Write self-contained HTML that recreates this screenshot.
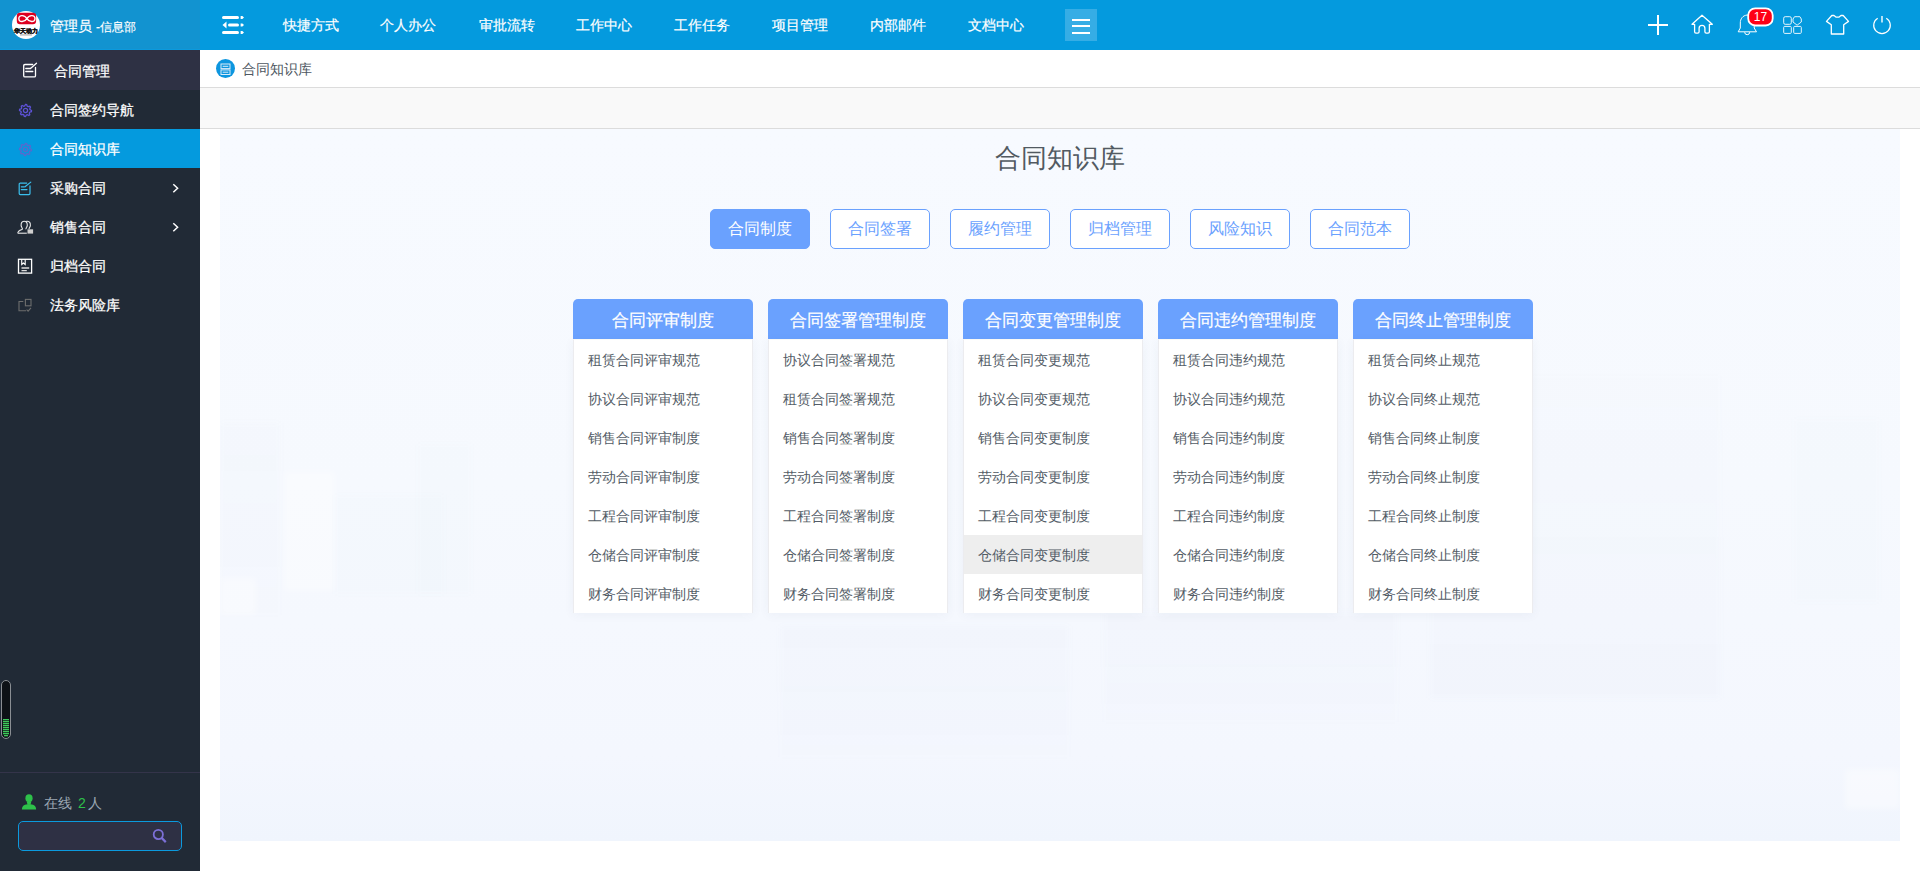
<!DOCTYPE html>
<html><head><meta charset="utf-8">
<style>
*{margin:0;padding:0;box-sizing:border-box}
html,body{width:1920px;height:871px;overflow:hidden;background:#fff;font-family:"Liberation Sans",sans-serif}
svg{position:absolute;overflow:visible}
#top{position:absolute;left:0;top:0;width:1920px;height:50px;background:#049ade}
#logohd{position:absolute;left:0;top:0;width:200px;height:50px;background:#1293d0;border-bottom:1px solid #0b9ade}
#logo{position:absolute;left:12px;top:11px;width:28px;height:28px;border-radius:50%;background:#fff;overflow:hidden}
#uname{position:absolute;left:50px;top:16px;font-size:14px;color:#fff;line-height:20px;white-space:nowrap;-webkit-text-stroke:0.2px #fff}
.nav{position:absolute;top:15px;font-size:14px;color:#fff;line-height:20px;white-space:nowrap;-webkit-text-stroke:0.2px #fff}
#hamb{position:absolute;left:1065px;top:9px;width:32px;height:32px;background:#36ade5}
#hamb i{position:absolute;left:7px;width:18px;height:2px;background:#fff}
#side{position:absolute;left:0;top:50px;width:200px;height:821px;background:#212a36}
.mi{position:absolute;left:0;width:200px;height:39px;color:#fff;font-size:14px;line-height:39px;-webkit-text-stroke:0.25px #fff}
.mi span{position:absolute;left:50px;top:1px}
#sep{position:absolute;left:0;top:722px;width:200px;height:1px;background:#34344a}
#bc{position:absolute;left:200px;top:50px;width:1720px;height:38px;background:#fff;border-bottom:1px solid #dcdcdc}
#band{position:absolute;left:200px;top:88px;width:1720px;height:41px;background:#f9f9f9;border-bottom:1px solid #dcdcdc}
#content{position:absolute;left:220px;top:129px;width:1680px;height:712px;background:linear-gradient(#f7faff 0%,#f6f9fe 50%,#f4f7fe 88%,#f0f5fd 100%);overflow:hidden}
.bs{position:absolute;filter:blur(3px)}
#title{position:absolute;left:0;width:1680px;top:11px;text-align:center;font-size:26px;line-height:36px;color:#525a62}
.btn{position:absolute;top:80px;width:100px;height:40px;border:1px solid #6aa1fe;border-radius:5px;background:#fff;color:#6aa1fe;font-size:16px;line-height:38px;text-align:center}
.btn.on{background:#6aa1fe;color:#fff}
.card{position:absolute;top:170px;width:180px}
.ch{height:40px;background:#6aa1fe;border-radius:5px 5px 0 0;color:#fff;font-size:17px;line-height:43px;text-align:center;white-space:nowrap;-webkit-text-stroke:0.2px #fff}
.cb{background:#fff;border-top:1px solid #fbfaf6;border-left:1px solid #ececef;border-right:1px solid #ececef;box-shadow:0 2px 10px rgba(60,80,120,.05)}
.cb div{height:39px;line-height:41px;padding-left:14px;font-size:14px;color:#535c66;white-space:nowrap}
.cb div.hl{background:#eeeeee}
</style></head><body>
<div id="top"></div>
<div id="logohd">
  <svg style="left:12px;top:11px" width="28" height="28" viewBox="0 0 28 28">
    <circle cx="14" cy="14" r="14" fill="#fff"/>
    <rect x="4.8" y="1.7" width="19.3" height="11.6" rx="3.2" fill="#dd0020"/>
    <path d="M14.9 7.6 C13 4.2 6.8 3.2 6.8 7.6 C6.8 12 13 11 14.9 7.6 C16.8 4.2 23 3.2 23 7.6 C23 12 16.8 11 14.9 7.6 Z" fill="none" stroke="#fff" stroke-width="1.4"/>
    <text x="14" y="21.8" font-size="6.2" font-weight="bold" text-anchor="middle" fill="#111" stroke="#111" stroke-width="0.35" letter-spacing="-0.1">华天动力</text>
    <rect x="8" y="23.2" width="12" height="1.4" fill="#bbb"/>
  </svg>
  <div id="uname">管理员<span style="position:absolute;left:46px;top:1px;font-size:12.2px;-webkit-text-stroke:0.15px #fff">-信息部</span></div>
</div>
<svg style="left:222px;top:16px" width="22" height="19" viewBox="0 0 22 19">
  <rect x="0" y="0" width="17" height="3" rx="1.5" fill="#fff"/>
  <path d="M18.6 0.0 H20.4 L22 1.5 L20.4 3.0 H18.6 Z" fill="#fff"/>
  <rect x="6" y="7.5" width="11" height="3" rx="1.5" fill="#fff"/>
  <path d="M18.6 7.5 H20.4 L22 9.0 L20.4 10.5 H18.6 Z" fill="#fff"/>
  <rect x="0" y="15" width="17" height="3" rx="1.5" fill="#fff"/>
  <path d="M18.6 15.0 H20.4 L22 16.5 L20.4 18.0 H18.6 Z" fill="#fff"/>
  <path d="M0.5 9 L4.5 5.5 L4.5 12.5 Z" fill="#fff"/>
</svg>
<div class="nav" style="left:283px">快捷方式</div>
<div class="nav" style="left:380px">个人办公</div>
<div class="nav" style="left:479px">审批流转</div>
<div class="nav" style="left:576px">工作中心</div>
<div class="nav" style="left:674px">工作任务</div>
<div class="nav" style="left:772px">项目管理</div>
<div class="nav" style="left:870px">内部邮件</div>
<div class="nav" style="left:968px">文档中心</div>

<svg style="left:1648px;top:15px" width="20" height="20" viewBox="0 0 20 20"><path d="M10 0V20M0 10H20" stroke="#fff" stroke-width="2"/></svg>
<svg style="left:1688px;top:10px" width="28" height="28" viewBox="0 0 28 28"><path d="M4 14.3 L14 5.3 L24.3 14.3 L21.4 14.3 L21.4 21.8 Q21.4 23.2 20 23.2 L18.3 23.2 Q16.9 23.2 16.9 21.8 L16.9 18.2 A2.9 2.9 0 0 0 11.1 18.2 L11.1 21.8 Q11.1 23.2 9.7 23.2 L8 23.2 Q6.6 23.2 6.6 21.8 L6.6 14.3 Z" fill="none" stroke="#fff" stroke-width="1.3" stroke-linejoin="round"/></svg>
<svg style="left:1734px;top:4px" width="42" height="36" viewBox="0 0 42 36"><path d="M13.2 11 C8.5 11.5 6.3 15 6.3 19 L6.3 24 L4.2 27.8 L22.5 27.8 L20.2 24 L20.2 19 C20.2 15 18 11.5 13.2 11 Z" fill="none" stroke="#fff" stroke-width="1"/><path d="M10.7 28.2 A2.5 2.5 0 0 0 15.7 28.2" fill="none" stroke="#fff" stroke-width="1"/>
<rect x="14.2" y="4.3" width="24.5" height="17.2" rx="7" fill="#ff0016" stroke="#fff" stroke-width="1.8"/>
<text x="26.5" y="17" font-size="12" text-anchor="middle" fill="#fff" font-family="Liberation Sans">17</text></svg>
<svg style="left:1778px;top:10px" width="30" height="30" viewBox="0 0 30 30" fill="none" stroke="#fff" stroke-width="1" opacity=".9"><rect x="5.7" y="6.7" width="7.6" height="7.6" rx="1.5"/><path d="M19.1 6.7 L21.9 6.7 L23.3 9 L23.3 12 L19.1 15.2 L15 12 L15 9 L16.5 6.7 Z" stroke-linejoin="round"/><rect x="5.7" y="16.4" width="7.6" height="7" rx="1"/><rect x="15.7" y="16.4" width="7.6" height="7" rx="1"/></svg>
<svg style="left:1822px;top:10px" width="30" height="30" viewBox="0 0 30 30"><path d="M9.8 5.5 L12 5.5 L14.2 7.2 L16.8 7.2 L19 5.5 L21.2 5.5 L26.5 11.4 L21.7 14.7 L21.7 24 L9.3 24 L9.3 14.7 L4.5 11.4 Z" fill="none" stroke="#fff" stroke-width="1.3" stroke-linejoin="round"/></svg>
<svg style="left:1867px;top:10px" width="30" height="30" viewBox="0 0 30 30" fill="none" stroke="#fff" stroke-width="1.2"><path d="M10.7 8.2 A8.3 8.3 0 1 0 19.3 8.2"/><path d="M15 6 V12.6" stroke-width="1.4"/></svg>
<div id="hamb"><i style="top:10px"></i><i style="top:16px"></i><i style="top:23px"></i></div>

<div id="side">
  <div class="mi" style="top:0;height:40px;line-height:40px;background:#2e3144"><span style="left:54px">合同管理</span></div>
  <div class="mi" style="top:40px"><span>合同签约导航</span></div>
  <div class="mi" style="top:79px;background:#049ade"><span>合同知识库</span></div>
  <div class="mi" style="top:118px"><span>采购合同</span></div>
  <div class="mi" style="top:157px"><span>销售合同</span></div>
  <div class="mi" style="top:196px"><span>归档合同</span></div>
  <div class="mi" style="top:235px"><span>法务风险库</span></div>
  <div id="sep"></div>
</div>
<svg style="left:23px;top:63px" width="15" height="15" viewBox="0 0 15 15" fill="none" stroke="#fff" stroke-width="1.3" stroke-linecap="round"><path d="M9.7 1.5 H2 Q0.7 1.5 0.7 2.8 V12.7 Q0.7 13.9 2 13.9 H11.3 Q12.5 13.9 12.5 12.7 V4.5"/><path d="M2.8 5.5 H7.3 M2.8 8.5 H9.8 M7.5 5.5 L13.5 0.3"/></svg>
<svg style="left:18.5px;top:104px" width="13" height="13" viewBox="0 0 13 13"><path d="M6.50 0.50 L7.67 0.62 L8.26 2.25 L9.06 2.68 L10.74 2.26 L11.49 3.17 L10.75 4.74 L11.01 5.60 L12.50 6.50 L12.38 7.67 L10.75 8.26 L10.32 9.06 L10.74 10.74 L9.83 11.49 L8.26 10.75 L7.40 11.01 L6.50 12.50 L5.33 12.38 L4.74 10.75 L3.94 10.32 L2.26 10.74 L1.51 9.83 L2.25 8.26 L1.99 7.40 L0.50 6.50 L0.62 5.33 L2.25 4.74 L2.68 3.94 L2.26 2.26 L3.17 1.51 L4.74 2.25 L5.60 1.99Z" fill="none" stroke="#5d52d6" stroke-width="1.3" opacity="1"/><circle cx="6.5" cy="6.5" r="2.1" fill="none" stroke="#5d52d6" stroke-width="1.3" opacity="1"/></svg>
<svg style="left:18.5px;top:143px" width="13" height="13" viewBox="0 0 13 13"><path d="M6.50 0.50 L7.67 0.62 L8.26 2.25 L9.06 2.68 L10.74 2.26 L11.49 3.17 L10.75 4.74 L11.01 5.60 L12.50 6.50 L12.38 7.67 L10.75 8.26 L10.32 9.06 L10.74 10.74 L9.83 11.49 L8.26 10.75 L7.40 11.01 L6.50 12.50 L5.33 12.38 L4.74 10.75 L3.94 10.32 L2.26 10.74 L1.51 9.83 L2.25 8.26 L1.99 7.40 L0.50 6.50 L0.62 5.33 L2.25 4.74 L2.68 3.94 L2.26 2.26 L3.17 1.51 L4.74 2.25 L5.60 1.99Z" fill="none" stroke="#6a5fc9" stroke-width="1.3" opacity="0.85"/><circle cx="6.5" cy="6.5" r="2.1" fill="none" stroke="#6a5fc9" stroke-width="1.3" opacity="0.85"/></svg>
<svg style="left:18px;top:181px" width="14" height="15" viewBox="0 0 14 15" fill="none" stroke="#3bbfee" stroke-width="1.2" stroke-linecap="round"><path d="M8.7 2.1 H2.3 Q1.2 2.1 1.2 3.2 V12.6 Q1.2 13.6 2.3 13.6 H10.9 Q12 13.6 12 12.6 V4.8"/><path d="M3.3 5.8 H6 M3.3 8.6 H9 M7 5.8 L12.8 1.1"/></svg>
<svg style="left:16px;top:220px" width="18" height="15" viewBox="0 0 18 15" fill="none" stroke="#e8e8e8" stroke-width="1.1"><path d="M1.8 13.2 C1.8 10.5 4.8 9.8 6.3 9.3 C6.6 8.5 6.4 8 5.8 7.3 C4.6 5.7 4.7 1.2 8.2 1.2 C11.7 1.2 11.8 5.7 10.6 7.3 C10 8 9.8 8.5 10.1 9.3"/><path d="M9.3 1.6 C10 1.3 10.6 1.2 11.3 1.2 C14.8 1.2 14.9 5.7 13.7 7.3 C13.2 8 13 8.4 13.1 9"/><path d="M1.8 13.2 H10.8"/><rect x="11.5" y="9.3" width="5.6" height="4.3" fill="#cfcfcf" stroke="none"/></svg>
<svg style="left:17px;top:258px" width="16" height="16" viewBox="0 0 16 16" fill="none" stroke="#fff" stroke-width="1.3"><rect x="1.5" y="1.3" width="13.1" height="13.8"/><path d="M4.7 1.5 V6.5 L6.4 5 L8.2 6.5 V1.5" stroke-width="1.1"/><path d="M4.5 10 H12.2 M4.5 12.6 H9.8" stroke="#ddd"/></svg>
<svg style="left:17px;top:297px" width="16" height="16" viewBox="0 0 16 16" fill="none" stroke="#6e6e6e" stroke-width="1.1"><path d="M6.3 4.5 H2 V13.7 H9"/><rect x="8.4" y="2.4" width="5.6" height="6.4"/><path d="M9.6 12.6 L11.1 14.1 L14 10.9"/></svg>
<svg style="left:165px;top:177px" width="22" height="22" viewBox="0 0 22 22" fill="none" stroke="#fff" stroke-width="1.5"><path d="M8.3 7.3 L12.6 11.3 L8.3 15.3"/></svg>
<svg style="left:165px;top:216px" width="22" height="22" viewBox="0 0 22 22" fill="none" stroke="#fff" stroke-width="1.5"><path d="M8.3 7.3 L12.6 11.3 L8.3 15.3"/></svg>


<div style="position:absolute;left:1px;top:680px;width:10px;height:59px;border:1px solid #8a8e93;border-radius:5px;background:#0d1116"></div>
<svg style="left:3px;top:718px" width="6" height="20" viewBox="0 0 6 20"><rect x="0" y="1" width="6" height="1.3" fill="#3ec95a"/><rect x="0" y="3" width="6" height="1.3" fill="#3ec95a"/><rect x="0" y="5" width="6" height="1.3" fill="#3ec95a"/><rect x="0" y="7" width="6" height="1.3" fill="#3ec95a"/><rect x="0" y="9" width="6" height="1.3" fill="#3ec95a"/><rect x="0" y="11" width="6" height="1.3" fill="#3ec95a"/><rect x="0" y="13" width="6" height="1.3" fill="#3ec95a"/><rect x="0" y="15" width="6" height="1.3" fill="#3ec95a"/><rect x="1" y="17" width="4" height="1.3" fill="#3ec95a"/></svg>
<svg style="left:21px;top:794px" width="16" height="16" viewBox="0 0 16 16"><ellipse cx="8" cy="4.3" rx="3.6" ry="4" fill="#2ec14a"/><path d="M0.9 15.5 C0.9 11.5 4 10.3 8 10.3 C12 10.3 15.1 11.5 15.1 15.5 Z" fill="#2ec14a"/><path d="M5.8 8 L10.2 8 L9.5 10.8 L6.5 10.8Z" fill="#2ec14a"/></svg>
<div style="position:absolute;left:44px;top:793px;font-size:14px;line-height:20px;color:#9aa6b2;white-space:nowrap">在线 <span style="color:#2ec14a;margin-left:2px">2</span><span style="margin-left:2px">人</span></div>
<div style="position:absolute;left:18px;top:821px;width:164px;height:30px;border:1.5px solid #0b9ade;border-radius:5px;background:#2e3044"></div>
<svg style="left:152px;top:828px" width="16" height="16" viewBox="0 0 16 16" fill="none" stroke="#7c6fd6" stroke-width="1.8"><circle cx="6.3" cy="6.5" r="4.6"/><path d="M9.6 9.9 L13.8 14.1" stroke-width="2.2"/></svg>
<div id="bc"><svg style="left:15.5px;top:9.3px" width="19" height="19" viewBox="0 0 19 19"><circle cx="9.5" cy="9.5" r="9.5" fill="#0d96df"/><rect x="5" y="5" width="9" height="4.6" fill="none" stroke="#dcecf9" stroke-width="1"/><rect x="5" y="10.9" width="9" height="4.6" fill="none" stroke="#dcecf9" stroke-width="1"/><path d="M6.7 7.3 H12.3 M6.7 13.2 H12.3" stroke="#dcecf9" stroke-width="1"/></svg><span style="position:absolute;left:42px;top:9px;font-size:14px;line-height:20px;color:#4e5761">合同知识库</span></div>
<div id="band"></div>
<div id="content">

  <div class="bs" style="left:0;top:294px;width:60px;height:192px;background:linear-gradient(rgba(120,140,190,0.017),rgba(120,140,190,0.007))"></div>
  <div class="bs" style="left:64px;top:342px;width:51px;height:120px;background:rgba(255,255,255,.35)"></div>
  <div class="bs" style="left:115px;top:366px;width:109px;height:99px;background:rgba(120,140,190,0.010)"></div>
  <div class="bs" style="left:198px;top:315px;width:53px;height:150px;background:rgba(120,140,190,0.013)"></div>
  <div class="bs" style="left:0;top:449px;width:36px;height:37px;background:rgba(255,255,255,.4)"></div>
  <div class="bs" style="left:560px;top:497px;width:289px;height:131px;background:linear-gradient(rgba(120,140,190,0.021),rgba(120,140,190,0.007))"></div>
  <div class="bs" style="left:884px;top:483px;width:293px;height:110px;background:linear-gradient(rgba(120,140,190,0.021),rgba(120,140,190,0.007))"></div>
  <div class="bs" style="left:1210px;top:247px;width:290px;height:322px;background:linear-gradient(rgba(120,140,190,0.007),rgba(120,140,190,0.021))"></div>
  <div class="bs" style="left:1574px;top:290px;width:85px;height:183px;background:rgba(120,140,190,0.010)"></div>
  <div class="bs" style="left:1625px;top:640px;width:55px;height:40px;background:rgba(255,255,255,.4)"></div>
    <div id="title">合同知识库</div>
  <div class="btn on" style="left:490px">合同制度</div>
  <div class="btn" style="left:610px">合同签署</div>
  <div class="btn" style="left:730px">履约管理</div>
  <div class="btn" style="left:850px">归档管理</div>
  <div class="btn" style="left:970px">风险知识</div>
  <div class="btn" style="left:1090px">合同范本</div>
</div>
<div id="cards" style="position:absolute;left:0;top:129px">
<div class="card" style="left:573px"><div class="ch">合同评审制度</div><div class="cb">
<div>租赁合同评审规范</div>
<div>协议合同评审规范</div>
<div>销售合同评审制度</div>
<div>劳动合同评审制度</div>
<div>工程合同评审制度</div>
<div>仓储合同评审制度</div>
<div>财务合同评审制度</div>
</div></div>
<div class="card" style="left:768px"><div class="ch">合同签署管理制度</div><div class="cb">
<div>协议合同签署规范</div>
<div>租赁合同签署规范</div>
<div>销售合同签署制度</div>
<div>劳动合同签署制度</div>
<div>工程合同签署制度</div>
<div>仓储合同签署制度</div>
<div>财务合同签署制度</div>
</div></div>
<div class="card" style="left:963px"><div class="ch">合同变更管理制度</div><div class="cb">
<div>租赁合同变更规范</div>
<div>协议合同变更规范</div>
<div>销售合同变更制度</div>
<div>劳动合同变更制度</div>
<div>工程合同变更制度</div>
<div class="hl">仓储合同变更制度</div>
<div>财务合同变更制度</div>
</div></div>
<div class="card" style="left:1158px"><div class="ch">合同违约管理制度</div><div class="cb">
<div>租赁合同违约规范</div>
<div>协议合同违约规范</div>
<div>销售合同违约制度</div>
<div>劳动合同违约制度</div>
<div>工程合同违约制度</div>
<div>仓储合同违约制度</div>
<div>财务合同违约制度</div>
</div></div>
<div class="card" style="left:1353px"><div class="ch">合同终止管理制度</div><div class="cb">
<div>租赁合同终止规范</div>
<div>协议合同终止规范</div>
<div>销售合同终止制度</div>
<div>劳动合同终止制度</div>
<div>工程合同终止制度</div>
<div>仓储合同终止制度</div>
<div>财务合同终止制度</div>
</div></div>
</div>
</body></html>
